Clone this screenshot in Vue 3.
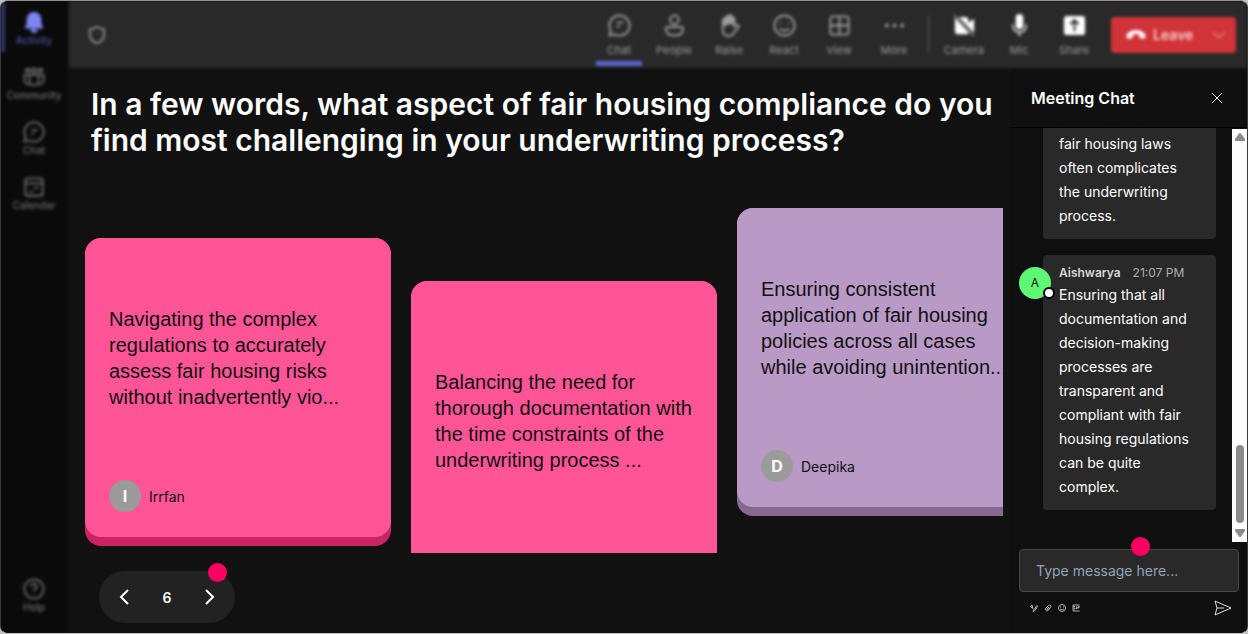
<script setup>
import { ref } from 'vue'

const page = ref(6)
const draft = ref('')

const railItems = [
  { name: 'Activity', icon: 'bell', active: true },
  { name: 'Community', icon: 'community' },
  { name: 'Chat', icon: 'chat' },
  { name: 'Calendar', icon: 'calendar' },
]

const tools = ['Chat', 'People', 'Raise', 'React', 'View', 'More']
const devices = ['Camera', 'Mic', 'Share']

const cards = [
  {
    author: 'Irrfan',
    tone: 'pink low',
    lines: ['Navigating the complex', 'regulations to accurately', 'assess fair housing risks', 'without inadvertently vio...'],
  },
  {
    tone: 'pink lowest',
    lines: ['Balancing the need for', 'thorough documentation with', 'the time constraints of the', 'underwriting process ...'],
  },
  {
    author: 'Deepika',
    tone: 'lilac',
    lines: ['Ensuring consistent', 'application of fair housing', 'policies across all cases', 'while avoiding unintention...'],
  },
]
</script>

<template>
  <div class="app">
    <nav class="rail" aria-label="Main">
      <button v-for="item in railItems" :key="item.name" class="rail-item" :class="{ active: item.active }">
        <svg v-if="item.icon === 'bell'" viewBox="0 0 24 24" fill="currentColor">
          <path d="M12 1a8 8 0 0 0-8 8v5l-2 4v1h20v-1l-2-4V9a8 8 0 0 0-8-8zM8 20a4 4 0 0 0 8 0z" />
        </svg>
        <svg v-else-if="item.icon === 'community'" class="line" viewBox="0 0 24 24">
          <circle cx="12" cy="5" r="2.500" /><circle cx="5" cy="5" r="2" /><circle cx="19" cy="5" r="2" />
          <path d="M7 10h10v6a5 5 0 0 1-10 0zM7 10H1.500v5a5 5 0 0 0 6 5M17 10h5.500v5a5 5 0 0 1-6 5" />
        </svg>
        <svg v-else-if="item.icon === 'chat'" class="line" viewBox="0 0 24 24">
          <path d="M12 1.500a10.500 10.500 0 1 1-5 19.700L1.500 22.500l1.300-5.500A10.500 10.500 0 0 1 12 1.500zM9 10h7M9 14h3" />
        </svg>
        <svg v-else class="line" viewBox="0 0 24 24">
          <rect x="2.500" y="2.500" width="19" height="19" rx="3" />
          <path d="M3 8h18M12 13h5M7 17h4" />
        </svg>
        <span>{{ item.name }}</span>
      </button>
      <button class="rail-item help">
        <svg class="line" viewBox="0 0 24 24">
          <circle cx="12" cy="12" r="10.500" />
          <path d="M9 9.500a3 3 0 1 1 4 2.800q-1 .5-1 2M12 17v1" />
        </svg>
        <span>Help</span>
      </button>
    </nav>

    <header class="topbar">
      <svg class="shield line" viewBox="0 0 24 24" aria-hidden="true">
        <path d="M12 2q4 3 8.500 3v6q0 8-8.500 11-8.500-3-8.500-11V5Q8 5 12 2z" />
      </svg>
      <div class="tools">
        <button v-for="name in tools" :key="name" class="tool" :class="{ selected: name === 'Chat' }">
          <svg class="line" viewBox="0 0 24 24">
            <path v-if="name === 'Chat'" d="M12 1.500a10.500 10.500 0 1 1-5 19.700L1.500 22.500l1.300-5.500A10.500 10.500 0 0 1 12 1.500zM9 9h7M9 13h3" />
            <g v-else-if="name === 'People'"><circle cx="12" cy="6" r="4.500" /><path d="M3 15.500q0-2 2-2h14q2 0 2 2 0 7-9 7t-9-7z" /></g>
            <g v-else-if="name === 'Raise'">
              <path d="M5 12V6.500q0-1.500 1.500-1.500T8 6.500V4q0-1.500 1.500-1.500T11 4V2.500q0-1.500 1.500-1.500T14 2.500V5q0-1.500 1.500-1.500T17 5v8l2.500-1.500q2-.5 2.500 1L16.500 20q-2 3-6 3Q5 23 5 17z" />
              <path fill="currentColor" d="M6 6h3V4l2 1V2h3v4l3-1v5q-6-1-8 1l-3 1z" />
            </g>
            <g v-else-if="name === 'React'"><circle cx="12" cy="12" r="10.500" /><path d="M8 9v1.500M16 9v1.500M7 15q5 5 10 0" /></g>
            <g v-else-if="name === 'View'"><rect x="2.500" y="2.500" width="19" height="19" rx="3" /><path d="M12 3v18M3 12h18" /></g>
            <g v-else fill="currentColor" stroke="none"><circle cx="4" cy="12" r="2" /><circle cx="12" cy="12" r="2" /><circle cx="20" cy="12" r="2" /></g>
          </svg>
          <span>{{ name }}</span>
        </button>
      </div>
      <div class="tools devices">
        <button v-for="name in devices" :key="name" class="tool device">
          <svg viewBox="0 0 24 24" fill="currentColor">
            <g v-if="name === 'Camera'">
              <path d="M5 3h8q3 0 3 3v3l6-4v14l-2-1L6 3zM2 4l15 16q-1 1-3 1H5q-3 0-3-3z" />
              <path d="M1 1l21 22" fill="none" stroke="currentColor" stroke-width="1" />
            </g>
            <g v-else-if="name === 'Mic'">
              <rect x="8" y="0" width="8" height="16" rx="4" />
              <path d="M5 11q0 8 7 8t7-8M12 19v4" fill="none" stroke="currentColor" stroke-width="1.500" />
            </g>
            <g v-else>
              <path fill-rule="evenodd" d="M4 2h16q3 0 3 3v14q0 3-3 3H4q-3 0-3-3V5q0-3 3-3zM12 5l-5 5 1.500 1.500L11 9v9h2V9l2.500 2.500L17 10z" />
            </g>
          </svg>
          <span>{{ name }}</span>
        </button>
      </div>
      <button class="leave">
        <svg class="phone" viewBox="0 0 20 12" fill="currentColor" aria-hidden="true">
          <path d="M10 1q6 0 9 4 1 2 0 4-.5 1-2 .7L14 9q-1-.5-1-2V5.500q-3-1-6 0V7q0 1.500-1 2l-3 .7Q1.500 10 1 9 0 7 1 5q3-4 9-4z" />
        </svg>
        <span>Leave</span>
        <svg class="chevron line" viewBox="0 0 16 16" aria-hidden="true"><path d="M2 5l6 6 6-6" /></svg>
      </button>
    </header>

    <main class="stage">
      <h1>In a few words, what aspect of fair housing compliance do you find most challenging in your underwriting process?</h1>
      <section class="board" aria-label="Responses">
        <article v-for="card in cards" :key="card.lines[0]" class="card" :class="card.tone">
          <div class="face">
            <p class="answer"><span v-for="line in card.lines" :key="line">{{ line }}</span></p>
            <div class="author">
              <template v-if="card.author">
                <span class="initial">{{ card.author[0] }}</span>
                <span>{{ card.author }}</span>
              </template>
            </div>
          </div>
        </article>
      </section>
      <div class="pager">
        <button aria-label="Previous" @click="page--"><svg viewBox="0 0 16 20"><path d="M12 3L5 10l7 7" /></svg></button>
        <output>{{ page }}</output>
        <button aria-label="Next" @click="page++"><svg viewBox="0 0 16 20"><path d="M4 3l7 7-7 7" /></svg></button>
        <i class="marker"></i>
      </div>
    </main>

    <aside class="chat">
      <div class="chat-head">
        <h2>Meeting Chat</h2>
        <button aria-label="Close chat"><svg viewBox="0 0 12 12"><path d="M1 1l10 10M11 1L1 11" /></svg></button>
      </div>
      <div class="thread">
        <div class="messages">
          <article class="bubble"><p>fair housing laws often complicates the underwriting process.</p></article>
          <article class="bubble">
            <div class="avatar">A<i></i></div>
            <header><strong>Aishwarya</strong><time>21:07 PM</time></header>
            <p>Ensuring that all documentation and decision-making processes are transparent and compliant with fair housing regulations can be quite complex.</p>
          </article>
        </div>
        <div class="scroll" aria-hidden="true">
          <svg viewBox="0 0 10 8"><path d="M5 0q.6 0 1 .6l4 5.400q.4 2-1 2H1Q-.4 8 0 6L4 .6Q4.400 0 5 0z" /></svg>
          <div class="thumb"></div>
          <svg viewBox="0 0 10 8"><path d="M5 8q.6 0 1-.6L10 2q.4-2-1-2H1Q-.4 0 0 2l4 5.400q.4.6 1 .6z" /></svg>
        </div>
      </div>
      <form class="composer" @submit.prevent>
        <div class="field">
          <input v-model="draft" type="text" aria-label="Message" placeholder="Type message here..." />
          <i class="marker"></i>
        </div>
        <div class="actions">
          <button type="button" aria-label="Format"><svg viewBox="0 0 16 16"><path d="M1 6l3-4 2 8M2 7h4M14 3L7 12l-1 3 3-1 6-9zM11 8l3 1" /></svg></button>
          <button type="button" aria-label="Attach"><svg viewBox="0 0 16 16"><path d="M13 7l-5 6q-3 2-5-1-1-2 1-4l5-5q3-2 4 0 2 2-1 4l-5 5q-2 0-1-2l4-4" /></svg></button>
          <button type="button" aria-label="Emoji"><svg viewBox="0 0 16 16"><circle cx="8" cy="8" r="7" /><path d="M5 5v2M11 5v2M4 10q4 4 8 0" /></svg></button>
          <button type="button" aria-label="GIF"><svg viewBox="0 0 16 16"><path d="M15 2H2v12h13M6 5H4v5h2V8M9 5v5M15 5h-3v5M12 7h3" /></svg></button>
          <button class="send" aria-label="Send"><svg viewBox="0 0 18 16"><path d="M1 1l16 7-16 7 2-7zM3 8h7" /></svg></button>
        </div>
      </form>
    </aside>
  </div>
</template>

<style>
body {
  margin: 0;
  background: #c4c4c4;
}
</style>

<style scoped>
* {
  box-sizing: border-box;
}

.app {
  display: grid;
  grid-template-columns: 66px minmax(0, 1fr) 236px;
  grid-template-rows: 67px minmax(0, 1fr);
  height: 100vh;
  overflow: hidden;
  border: 1px solid;
  border-color: #8b8f8d #3a3a3a #c4c4c4;
  border-radius: 8px;
  background: #111;
  color: #fff;
  font-family: Inter, "Liberation Sans", sans-serif;
}

button {
  padding: 0;
  border: 0;
  background: none;
  color: inherit;
  font: inherit;
}

svg {
  display: block;
}

.line {
  fill: none;
  stroke: currentColor;
  stroke-width: 2;
}

.rail {
  grid-row: 1 / 3;
  display: flex;
  flex-direction: column;
  align-items: stretch;
  gap: 5px;
  padding: 1px 0 14px;
  background: #0a0a0a;
  color: #6c6c6c;
  filter: blur(1px) blur(1px);
}

.rail-item {
  display: flex;
  flex-direction: column;
  align-items: center;
  gap: 0;
  height: 50px;
  padding-top: 9px;
  border-left: 4px solid transparent;
  border-right: 4px solid transparent;
  font-size: 10px;
  font-weight: 500;
  line-height: 14px;
}

.rail-item svg {
  width: 22px;
  height: 22px;
}

.rail-item.active {
  border-left-color: #343571;
  color: #5152a2;
}

.rail-item.active svg {
  color: #7f85f5;
}

.help {
  margin-top: auto;
}

.topbar {
  grid-column: 2 / 4;
  display: flex;
  align-items: center;
  margin-left: 2px;
  padding: 0 11px 0 18px;
  background: #292929;
  color: #9c9c9c;
  filter: blur(1px) blur(1px);
}

.shield {
  width: 20px;
  height: 20px;
  margin-right: auto;
}

.tools {
  display: flex;
  gap: 9px;
  align-self: stretch;
}

.tool {
  display: flex;
  flex-direction: column;
  align-items: center;
  gap: 6px;
  width: 46px;
  padding-top: 13px;
  border-bottom: 5px solid transparent;
  margin-bottom: 2px;
  font-size: 11px;
  line-height: 14px;
}

.tool svg {
  width: 23px;
  height: 23px;
}

.selected {
  border-bottom-color: #5f63cc;
}

.devices {
  margin-left: 24px;
  position: relative;
}

.devices::before {
  content: "";
  position: absolute;
  left: -13px;
  top: 15px;
  width: 1px;
  height: 36px;
  background: #606060;
}

.device svg {
  color: #fff;
}

.leave {
  display: flex;
  align-items: center;
  width: 125px;
  height: 36px;
  margin-left: 14px;
  padding: 0 9px 0 15px;
  border-radius: 4px;
  background: #d13438;
  color: #f8cccc;
  font-size: 14px;
  font-weight: 600;
}

.phone {
  width: 20px;
  height: 12px;
  margin-right: 7px;
  color: #fff;
}

.chevron {
  width: 16px;
  height: 16px;
  margin-left: auto;
}

.chevron.line {
  stroke-width: 1;
}

.stage {
  display: flex;
  flex-direction: column;
  min-width: 0;
  padding: 18px 8px 10px 18px;
}

h1 {
  margin: 0 0 50px;
  padding-left: 6px;
  font-size: 30px;
  font-weight: 600;
  line-height: 36px;
}

.board {
  display: flex;
  flex: 1;
  align-items: flex-start;
  gap: 20px;
  min-height: 0;
  overflow: hidden;
}

.card {
  flex: 0 0 306px;
  padding-bottom: 9px;
  border-radius: 16px;
  color: #111;
}

.face {
  display: flex;
  flex-direction: column;
  gap: 26px;
  min-height: 299px;
  padding: 23px 24px 25px;
  border-radius: 16px;
}

.pink {
  background: #cc2366;
}

.pink .face {
  background: #ff5596;
}

.lilac {
  background: #866891;
}

.lilac .face {
  background: #b999c6;
}

.low {
  margin-top: 30px;
}

.lowest {
  margin-top: 73px;
}

.lowest .face {
  min-height: 339px;
}

.answer {
  display: flex;
  flex: 1;
  flex-direction: column;
  justify-content: center;
  margin: 0;
  font-family: "Liberation Sans", Arial, sans-serif;
  font-size: 20px;
  line-height: 26px;
  white-space: nowrap;
}

.author {
  display: flex;
  align-items: center;
  gap: 8px;
  height: 32px;
  font-size: 14px;
}

.initial {
  display: grid;
  place-items: center;
  width: 32px;
  height: 32px;
  border-radius: 50%;
  background: #9b9b9b;
  color: #fff;
  font-size: 16px;
  font-weight: 700;
}

.pager {
  position: relative;
  display: flex;
  align-items: center;
  justify-content: space-between;
  align-self: flex-start;
  width: 136px;
  height: 52px;
  margin: 18px 0 0 14px;
  padding: 0 17px;
  border-radius: 26px;
  background: #222;
  font-size: 14px;
  font-weight: 600;
}

.pager svg {
  width: 16px;
  height: 20px;
  fill: none;
  stroke: #fff;
  stroke-width: 2;
}

.marker {
  position: absolute;
  top: -8px;
  right: 8px;
  width: 19px;
  height: 19px;
  border-radius: 50%;
  background: #ff0062;
}

.chat {
  display: flex;
  flex-direction: column;
  min-height: 0;
  background: #0f0f0f;
}

.chat-head {
  display: flex;
  align-items: center;
  justify-content: space-between;
  height: 60px;
  padding: 0 24px 0 20px;
  border-bottom: 1px solid #000;
}

h2 {
  margin: 0;
  font-size: 16px;
  font-weight: 600;
}

.chat-head svg {
  width: 12px;
  height: 12px;
  stroke: #fff;
}

.thread {
  display: flex;
  flex: 1;
  min-height: 0;
}

.messages {
  display: flex;
  flex: 1;
  flex-direction: column;
  justify-content: flex-end;
  gap: 16px;
  padding: 0 16px 32px 32px;
  overflow: hidden;
}

.bubble {
  position: relative;
  padding: 8px 16px 11px;
  border-radius: 4px;
  background: #292929;
  font-size: 14px;
  line-height: 24px;
}

.bubble p {
  margin: 0;
}

.bubble header {
  display: flex;
  gap: 12px;
  color: #d6d6d6;
  font-size: 12px;
  line-height: 20px;
}

.bubble strong {
  font-weight: 600;
}

.bubble time {
  color: #adadad;
}

.avatar {
  position: absolute;
  left: -24px;
  top: 12px;
  display: grid;
  place-items: center;
  width: 32px;
  height: 32px;
  border-radius: 50%;
  background: #5ff874;
  color: #111;
  font-size: 12px;
}

.avatar i {
  position: absolute;
  right: -4px;
  bottom: 0;
  width: 12px;
  height: 12px;
  border: 2px solid #000;
  border-radius: 50%;
  background: #fff;
}

.scroll {
  display: flex;
  flex-direction: column;
  align-items: center;
  width: 15px;
  margin-top: 1px;
  padding: 4px 0 5px;
  background: #fcfcfc;
}

.scroll svg {
  width: 10px;
  height: 8px;
  fill: #8b8b8b;
}

.thumb {
  width: 8px;
  height: 78px;
  margin: auto 0 6px;
  border-radius: 4px;
  background: #8b8b8b;
}

.composer {
  padding: 7px 8px 15px;
}

.field {
  position: relative;
}

.field .marker {
  top: -12px;
  left: 112px;
}

input {
  display: block;
  width: 100%;
  height: 43px;
  padding: 0 16px;
  border: 1px solid #484848;
  border-radius: 4px;
  background: #292929;
  color: #fff;
  font: inherit;
  font-size: 14px;
}

input::placeholder {
  color: #94a3b8;
}

.actions {
  display: flex;
  align-items: center;
  gap: 6px;
  height: 20px;
  margin-top: 6px;
  padding: 0 7px 0 11px;
}

.actions svg {
  width: 8px;
  height: 8px;
  fill: none;
  stroke: #b0b0b0;
  stroke-width: 2;
}

.actions .send {
  margin-left: auto;
}

.actions .send svg {
  width: 18px;
  height: 16px;
  stroke: #ddd;
  stroke-width: 1;
}
</style>
